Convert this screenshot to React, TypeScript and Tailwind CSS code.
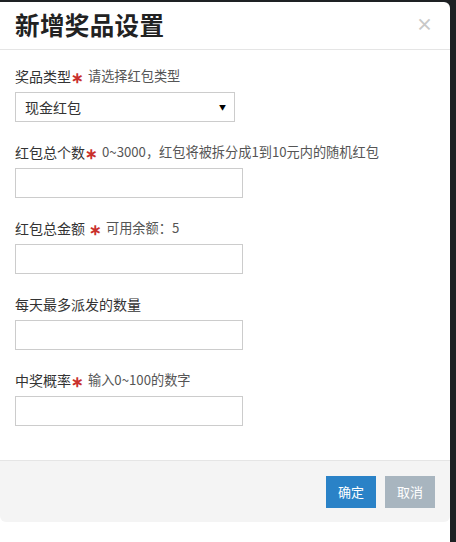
import React from "react";

const font = { fontFamily: '"Noto Sans CJK SC", "Noto Sans", sans-serif' };

function Label({ main, star = true, hint, spaceBeforeStar = false }: { main: string; star?: boolean; hint?: string; spaceBeforeStar?: boolean }) {
  return (
    <div className="h-5 flex items-center text-[14px] leading-5 text-[#333] whitespace-nowrap">
      <span>{main}</span>
      {star && <span className={`text-[#c9302c] text-[15px] font-bold leading-none ${spaceBeforeStar ? "ml-[4px]" : ""}`}>∗</span>}
      {hint && <span className="ml-[4px] text-[13.2px] text-[#555]">{hint}</span>}
    </div>
  );
}

function Input() {
  return <div className="mt-[6px] h-[30px] w-[228px] border border-[#ccc] bg-white" />;
}

export default function App() {
  return (
    <div className="w-[456px] h-[542px] bg-[#1e2124] pt-[2px] pr-[6px] overflow-hidden" style={font}>
      <div className="h-[560px] bg-white rounded-tr-[6px] rounded-bl-[6px] flex flex-col">
        <div className="h-[48px] border-b border-[#e5e5e5] flex items-center justify-between pl-[15px] pr-[17px]">
          <div className="text-[24.5px] font-bold text-[#222] leading-none tracking-[0.4px]">新增奖品设置</div>
          <div className="text-[17px] font-bold text-[#c8c8c8] leading-none -mt-[4px]">×</div>
        </div>
        <div className="pl-[15px] pt-[16px] flex flex-col gap-[20px] h-[410px]">
          <div>
            <Label main="奖品类型" hint="请选择红包类型" />
            <div className="mt-[6px] h-[30px] w-[220px] border border-[#ccc] bg-white flex items-center justify-between pl-[9px] pr-[8px]">
              <span className="text-[14px] text-[#333]">现金红包</span>
              <span className="text-[7px] text-black">▼</span>
            </div>
          </div>
          <div>
            <Label main="红包总个数" hint="0~3000，红包将被拆分成1到10元内的随机红包" />
            <Input />
          </div>
          <div>
            <Label main="红包总金额" spaceBeforeStar hint="可用余额：5" />
            <Input />
          </div>
          <div>
            <Label main="每天最多派发的数量" star={false} />
            <Input />
          </div>
          <div>
            <Label main="中奖概率" hint="输入0~100的数字" />
            <Input />
          </div>
        </div>
        <div className="h-[62px] border-t border-[#e5e5e5] bg-[#f4f4f4] rounded-b-[6px] flex items-center justify-end gap-[9px] pr-[15px]">
          <button className="w-[50px] h-[32px] bg-[#2a82c7] text-white text-[13px]">确定</button>
          <button className="w-[50px] h-[32px] bg-[#a8b5bf] text-white text-[13px]">取消</button>
        </div>
      </div>
    </div>
  );
}
